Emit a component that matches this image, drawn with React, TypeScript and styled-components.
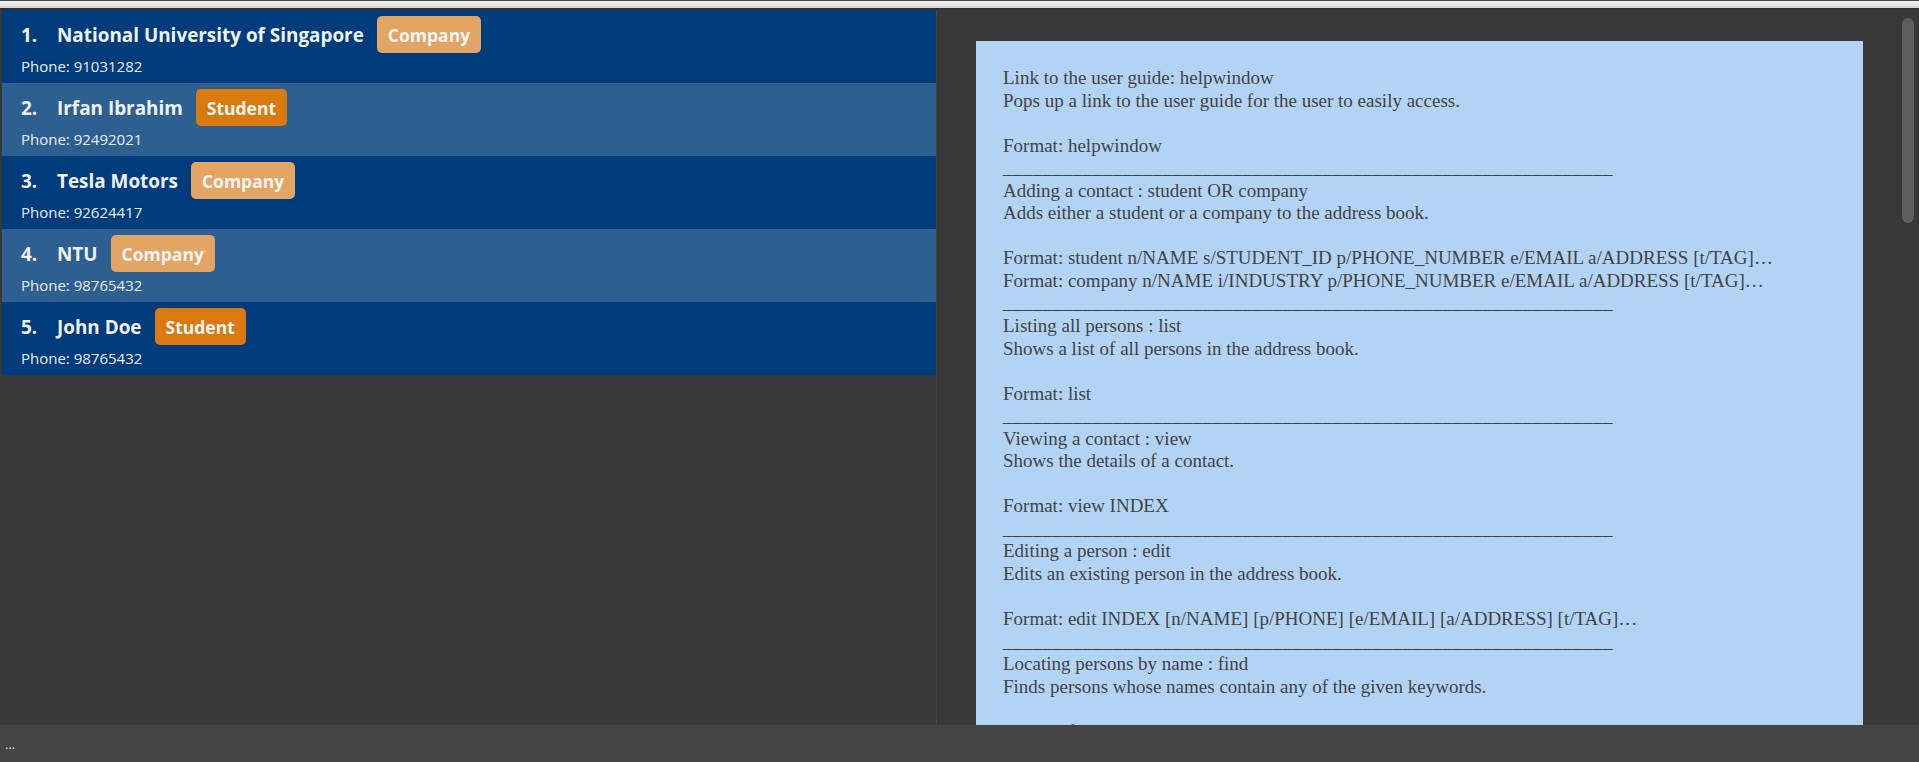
import * as React from 'react'
import styled, { createGlobalStyle } from 'styled-components'

interface Person {
  name: string
  phone: string
  kind: 'Company' | 'Student'
}

const persons: Person[] = [
  { name: 'National University of Singapore', phone: '91031282', kind: 'Company' },
  { name: 'Irfan Ibrahim', phone: '92492021', kind: 'Student' },
  { name: 'Tesla Motors', phone: '92624417', kind: 'Company' },
  { name: 'NTU', phone: '98765432', kind: 'Company' },
  { name: 'John Doe', phone: '98765432', kind: 'Student' },
]

const rule = '_'.repeat(61)

const helpLines: string[] = [
  'Link to the user guide: helpwindow',
  'Pops up a link to the user guide for the user to easily access.',
  '',
  'Format: helpwindow',
  rule,
  'Adding a contact : student OR company',
  'Adds either a student or a company to the address book.',
  '',
  'Format: student n/NAME s/STUDENT_ID p/PHONE_NUMBER e/EMAIL a/ADDRESS [t/TAG]…',
  'Format: company n/NAME i/INDUSTRY p/PHONE_NUMBER e/EMAIL a/ADDRESS [t/TAG]…',
  rule,
  'Listing all persons : list',
  'Shows a list of all persons in the address book.',
  '',
  'Format: list',
  rule,
  'Viewing a contact : view',
  'Shows the details of a contact.',
  '',
  'Format: view INDEX',
  rule,
  'Editing a person : edit',
  'Edits an existing person in the address book.',
  '',
  'Format: edit INDEX [n/NAME] [p/PHONE] [e/EMAIL] [a/ADDRESS] [t/TAG]…',
  rule,
  'Locating persons by name : find',
  'Finds persons whose names contain any of the given keywords.',
  '',
  'Format: find KEYWORD [MORE_KEYWORDS]…',
]

const GlobalStyle = createGlobalStyle`
  html, body {
    margin: 0;
    padding: 0;
    background: #383838;
    overflow: hidden;
  }
`

const Window = styled.div`
  width: 1919px;
  height: 762px;
  display: flex;
  flex-direction: column;
  background: #383838;
  overflow: hidden;
`

const TitleStrip = styled.div`
  height: 7px;
  flex: none;
  border-top: 1px solid #4a4a4a;
  border-bottom: 2px solid #303030;
  background: linear-gradient(#f4f4f4, #d6d6d6);
`

const Main = styled.div`
  flex: 1;
  display: flex;
  min-height: 0;
`

const ListPane = styled.div`
  width: 934px;
  flex: none;
  padding-left: 2px;
  border-right: 1px solid #474747;
  display: flex;
  flex-direction: column;
`

const Card = styled.div<{ $alt: boolean }>`
  height: 73px;
  box-sizing: border-box;
  padding: 6px 0 0 19px;
  background: ${(p) => (p.$alt ? '#2e5f91' : '#003c7c')};
  font-family: 'Open Sans', 'Noto Sans', sans-serif;
  color: #eef2f7;
`

const NameLine = styled.div`
  display: flex;
  align-items: center;
  height: 37px;
`

const Index = styled.span`
  width: 36px;
  font-size: 18.9px;
  font-weight: 700;
`

const Name = styled.span`
  font-size: 18.9px;
  font-weight: 700;
  margin-right: 13px;
`

const Tag = styled.span<{ $kind: 'Company' | 'Student' }>`
  height: 37px;
  box-sizing: border-box;
  padding: 0 11px;
  display: flex;
  align-items: center;
  border-radius: 5px;
  font-size: 17.5px;
  font-weight: 700;
  color: #f3f3f3;
  background: ${(p) => (p.$kind === 'Company' ? '#e3a564' : '#da7a0e')};
`

const Phone = styled.div`
  margin-top: 3px;
  font-size: 15px;
  color: #e8ecf2;
`

const HelpPane = styled.div`
  flex: 1;
  position: relative;
  overflow: hidden;
  padding: 31px 0 0 39px;
`

const HelpBox = styled.div`
  width: 887px;
  box-sizing: border-box;
  padding: 26px 27px;
  background: #b3d3f5;
  font-family: 'Liberation Serif', 'Times New Roman', serif;
  font-size: 19px;
  line-height: 22.55px;
  color: #434343;
`

const HelpLine = styled.div<{ $rule: boolean }>`
  white-space: pre;
  height: 22.55px;
  letter-spacing: ${(p) => (p.$rule ? '0.5px' : 'normal')};
`

const ScrollThumb = styled.div`
  position: absolute;
  top: 8px;
  right: 5px;
  width: 12px;
  height: 205px;
  border-radius: 6px;
  background: #5e5e5e;
`

const StatusBar = styled.div`
  height: 37px;
  flex: none;
  background: #444444;
  display: flex;
  align-items: center;
  padding-left: 5px;
  font-family: 'Open Sans', sans-serif;
  font-size: 13px;
  color: #dedede;
`

export default function App() {
  return (
    <Window>
      <GlobalStyle />
      <TitleStrip />
      <Main>
        <ListPane>
          {persons.map((person, i) => (
            <Card key={i} $alt={i % 2 === 1}>
              <NameLine>
                <Index>{i + 1}.</Index>
                <Name>{person.name}</Name>
                <Tag $kind={person.kind}>{person.kind}</Tag>
              </NameLine>
              <Phone>Phone: {person.phone}</Phone>
            </Card>
          ))}
        </ListPane>
        <HelpPane>
          <HelpBox>
            {helpLines.map((line, i) => (
              <HelpLine key={i} $rule={line === rule}>
                {line}
              </HelpLine>
            ))}
          </HelpBox>
          <ScrollThumb />
        </HelpPane>
      </Main>
      <StatusBar>...</StatusBar>
    </Window>
  )
}
